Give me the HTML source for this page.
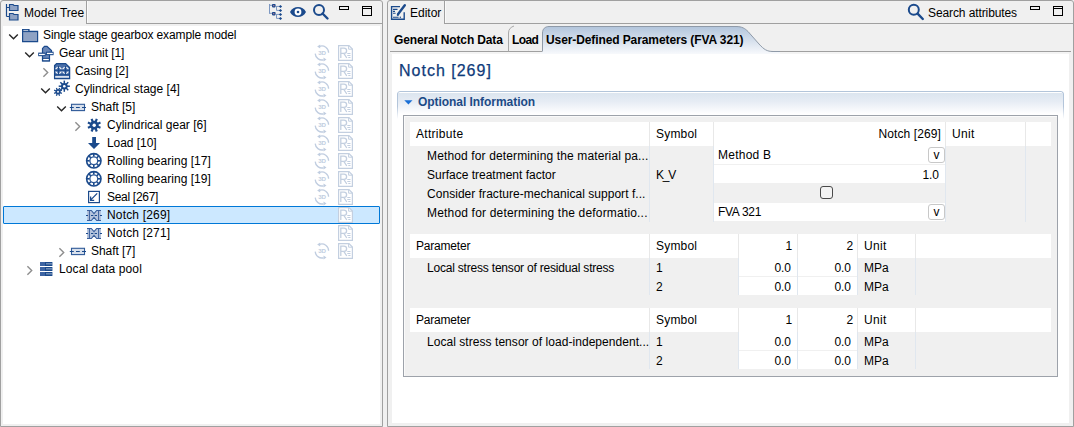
<!DOCTYPE html>
<html><head><meta charset="utf-8">
<style>
*{box-sizing:border-box}
html,body{margin:0;padding:0}
body{width:1074px;height:427px;position:relative;overflow:hidden;background:#f0f0f0;font-family:"Liberation Sans",sans-serif;font-size:12px;color:#000;letter-spacing:-0.05px}
.a{position:absolute}
.panel{position:absolute;border:1px solid #a0a0a0;border-radius:3px 3px 0 0;background:#f0f0f0}
.hl{position:absolute;height:1px;background:#a0a0a0}
.vl{position:absolute;width:1px;background:#a0a0a0}
.t{position:absolute;white-space:nowrap;line-height:18px;height:18px}
svg{position:absolute;overflow:visible}
.b{font-weight:bold}
</style></head><body>

<div class="panel" style="left:0;top:0;width:383px;height:427px"></div>
<div class="vl" style="left:86px;top:1px;height:23px"></div>
<div class="a" style="left:87px;top:1px;width:1px;height:22px;background:#fafafa"></div>
<div class="hl" style="left:87px;top:23px;width:295px"></div>
<div class="a" style="left:3px;top:26px;width:377px;height:398px;background:#fff"></div>
<svg style="left:0;top:0" width="24" height="24" viewBox="0 0 24 24">
<path d="M6.5 4v12.5M6.5 7.5h3M6.5 16.5h3" stroke="#1b4a8c" stroke-width="1.2" fill="none"/>
<path d="M9.5 4.5h3.5l1 1h4v5h-8.5z" fill="#8ea2c4" stroke="#1b4a8c" stroke-width="1.2"/>
<path d="M9.5 13.5h3.5l1 1h4v5.5h-8.5z" fill="#8ea2c4" stroke="#1b4a8c" stroke-width="1.2"/>
</svg>
<div class="t" style="left:24px;top:4px;letter-spacing:0.02px">Model Tree</div>
<svg style="left:262px;top:0" width="120" height="24" viewBox="0 0 120 24">
<g stroke="#7d98c2" stroke-width="1" fill="none">
<path d="M7.5 4v9.8M7.5 5.3h3M7.5 13.3h3M14.5 6v4.4M14.5 14v4.4M14.5 6.4h3.5M14.5 10.4h3.5M14.5 14.4h3.5M14.5 18.4h3.5"/>
</g>
<rect x="10" y="4" width="3.6" height="3.4" rx="0.8" fill="#1b4a8c"/>
<rect x="10" y="12" width="3.6" height="3.4" rx="0.8" fill="#1b4a8c"/>
<circle cx="11.8" cy="5.7" r="0.6" fill="#f08aa0"/>
<circle cx="11.8" cy="13.7" r="0.6" fill="#f08aa0"/>
<path d="M18.5 4.9l1.6 1.6-1.6 1.6-1.6-1.6zM18.5 8.9l1.6 1.6-1.6 1.6-1.6-1.6zM18.5 12.9l1.6 1.6-1.6 1.6-1.6-1.6zM18.5 16.9l1.6 1.6-1.6 1.6-1.6-1.6z" fill="#1b4a8c"/>
<path d="M28 12c3.2-6.8 12.8-6.8 16 0c-3.2 6.8-12.8 6.8-16 0z" fill="#1b4a8c"/>
<circle cx="36" cy="12" r="3.4" fill="#fff"/><circle cx="36" cy="12" r="2.1" fill="#fff" stroke="#1b4a8c" stroke-width="0"/><circle cx="36" cy="12" r="1.3" fill="#1b4a8c"/>
<circle cx="57" cy="10" r="5" stroke="#1b4a8c" stroke-width="2" fill="none"/>
<path d="M60.5 13.5l5 5" stroke="#1b4a8c" stroke-width="2.4" stroke-linecap="round"/>
<rect x="77.5" y="6.5" width="9" height="3" fill="none" stroke="#000" stroke-width="1"/>
<rect x="100.5" y="6.5" width="9" height="9" fill="none" stroke="#000" stroke-width="1"/>
<path d="M100.5 8.5h9" stroke="#000" stroke-width="1"/>
</svg>
<div class="a" style="left:3px;top:206px;width:377px;height:18px;background:#cce8ff;border:1px solid #0078d7;border-radius:1px"></div>
<svg style="left:8px;top:33px" width="10" height="7" viewBox="0 0 10 7"><path d="M1.2 1.4l4.3 4.3L9.8 1.4" stroke="#262626" stroke-width="1.4" fill="none"/></svg>
<svg style="left:20px;top:26px" width="20" height="18" viewBox="0 0 20 18"><path d="M2.6 15.6V3.6h6.4v1.7h8.6v10.3z" fill="#8ea2c4" stroke="#1b4a8c" stroke-width="1.2"/><path d="M3.5 4.4h4.5" stroke="#c3cddd" stroke-width="0.9"/><path d="M2.6 5.6h15" stroke="#1b4a8c" stroke-width="1"/></svg>
<div class="t" style="left:43px;top:26px;letter-spacing:-0.12px">Single stage gearbox example model</div>
<svg style="left:24px;top:51px" width="10" height="7" viewBox="0 0 10 7"><path d="M1.2 1.4l4.3 4.3L9.8 1.4" stroke="#262626" stroke-width="1.4" fill="none"/></svg>
<svg style="left:36px;top:44px" width="20" height="18" viewBox="0 0 20 18"><path d="M6.5 17V4.4L8.5 2.3H11L15.5 6.6V8.4H13.5V17Z" fill="#6a87b8" stroke="#1b4a8c" stroke-width="1.2"/><rect x="2.2" y="8.6" width="7.4" height="3.6" fill="#1b4a8c"/><rect x="3" y="9.8" width="5.8" height="1.3" fill="#fff"/><rect x="10" y="7.7" width="7.6" height="3.5" fill="#1b4a8c"/><rect x="10.9" y="8.8" width="5.9" height="1.3" fill="#fff"/><rect x="6.2" y="13.8" width="7.6" height="3.6" fill="#1b4a8c"/><rect x="7.2" y="14.9" width="5.6" height="1.3" fill="#fff"/></svg>
<div class="t" style="left:59px;top:44px;letter-spacing:-0.05px">Gear unit [1]</div>
<svg style="left:314px;top:45px" width="20" height="20" viewBox="314 45 20 20">
<path d="M319.5 46.3A6.8 6.8 0 0 1 328.6 52.8" stroke="#c0cde0" stroke-width="1.3" fill="none"/>
<path d="M315.2 53.6A6.8 6.8 0 0 0 323.5 59.8" stroke="#c0cde0" stroke-width="1.3" fill="none"/>
<path d="M317.2 46.5l3-2v4z" fill="#c0cde0"/>
<path d="M326.5 59.6l-3 2v-4z" fill="#c0cde0"/>
<text x="322" y="55.3" font-family="Liberation Sans" font-size="6.2" font-weight="bold" fill="#c0cde0" text-anchor="middle" letter-spacing="-0.1">3D</text>
</svg>
<svg style="left:338px;top:45px" width="16" height="16" viewBox="0 0 16 16">
<path d="M0.6 0.6h10.4l3.4 3.4v11.4h-13.8z" fill="#fff" stroke="#c3cfe0" stroke-width="1.2"/>
<path d="M10.6 0.6v3.6h3.8" fill="none" stroke="#c3cfe0" stroke-width="1"/>
<path d="M2.8 13V3.2h3.2a2.6 2.6 0 0 1 0 5.2H3.2M5.8 8.4l3 4.6" stroke="#c3cfe0" stroke-width="1.3" fill="none"/>
<path d="M9.3 8.5h3.2M9.3 10.5h3.2M10.3 12.5h2.2" stroke="#c3cfe0" stroke-width="1" fill="none"/>
</svg>
<svg style="left:42px;top:67px" width="7" height="10" viewBox="0 0 7 10"><path d="M1.4 1.2l4.3 4.3L1.4 9.8" stroke="#8e8e8e" stroke-width="1.4" fill="none"/></svg>
<svg style="left:52px;top:62px" width="20" height="18" viewBox="0 0 20 18"><path d="M2.6 16.6V3.6L4.6 1.6H13.6L17.6 5.6V16.6Z" fill="#4a6fa8" stroke="#1b4a8c" stroke-width="1.3"/><path d="M3 8.3h14.5M6.5 4v9M13.5 4v9M3 12.8h14.5" stroke="#1b4a8c" stroke-width="1"/><g stroke="#fff" stroke-width="1.1" fill="none"><path d="M3.6 7.2l2-2M7.4 5.2l2 2M3.6 9.6l2 2M7.4 11.6l2-2M10.6 7.2l2-2M14.4 5.2l2 2M10.6 9.6l2 2M14.4 11.6l2-2"/></g><rect x="3.2" y="14.2" width="13.8" height="1.4" fill="#fff"/></svg>
<div class="t" style="left:75px;top:62px;letter-spacing:-0.05px">Casing [2]</div>
<svg style="left:314px;top:63px" width="20" height="20" viewBox="314 45 20 20">
<path d="M319.5 46.3A6.8 6.8 0 0 1 328.6 52.8" stroke="#c0cde0" stroke-width="1.3" fill="none"/>
<path d="M315.2 53.6A6.8 6.8 0 0 0 323.5 59.8" stroke="#c0cde0" stroke-width="1.3" fill="none"/>
<path d="M317.2 46.5l3-2v4z" fill="#c0cde0"/>
<path d="M326.5 59.6l-3 2v-4z" fill="#c0cde0"/>
<text x="322" y="55.3" font-family="Liberation Sans" font-size="6.2" font-weight="bold" fill="#c0cde0" text-anchor="middle" letter-spacing="-0.1">3D</text>
</svg>
<svg style="left:338px;top:63px" width="16" height="16" viewBox="0 0 16 16">
<path d="M0.6 0.6h10.4l3.4 3.4v11.4h-13.8z" fill="#fff" stroke="#c3cfe0" stroke-width="1.2"/>
<path d="M10.6 0.6v3.6h3.8" fill="none" stroke="#c3cfe0" stroke-width="1"/>
<path d="M2.8 13V3.2h3.2a2.6 2.6 0 0 1 0 5.2H3.2M5.8 8.4l3 4.6" stroke="#c3cfe0" stroke-width="1.3" fill="none"/>
<path d="M9.3 8.5h3.2M9.3 10.5h3.2M10.3 12.5h2.2" stroke="#c3cfe0" stroke-width="1" fill="none"/>
</svg>
<svg style="left:40px;top:87px" width="10" height="7" viewBox="0 0 10 7"><path d="M1.2 1.4l4.3 4.3L9.8 1.4" stroke="#262626" stroke-width="1.4" fill="none"/></svg>
<svg style="left:52px;top:80px" width="20" height="18" viewBox="0 0 20 18"><circle cx="12.3" cy="6.2" r="3.3" fill="#1b4a8c"/><rect x="11.55" y="0.60" width="1.5" height="3.3" fill="#1b4a8c" transform="rotate(0.0 12.3 6.2)"/><rect x="11.55" y="0.60" width="1.5" height="3.3" fill="#1b4a8c" transform="rotate(45.0 12.3 6.2)"/><rect x="11.55" y="0.60" width="1.5" height="3.3" fill="#1b4a8c" transform="rotate(90.0 12.3 6.2)"/><rect x="11.55" y="0.60" width="1.5" height="3.3" fill="#1b4a8c" transform="rotate(135.0 12.3 6.2)"/><rect x="11.55" y="0.60" width="1.5" height="3.3" fill="#1b4a8c" transform="rotate(180.0 12.3 6.2)"/><rect x="11.55" y="0.60" width="1.5" height="3.3" fill="#1b4a8c" transform="rotate(225.0 12.3 6.2)"/><rect x="11.55" y="0.60" width="1.5" height="3.3" fill="#1b4a8c" transform="rotate(270.0 12.3 6.2)"/><rect x="11.55" y="0.60" width="1.5" height="3.3" fill="#1b4a8c" transform="rotate(315.0 12.3 6.2)"/><circle cx="12.3" cy="6.2" r="1.3" fill="#fff"/><circle cx="6" cy="11.8" r="2.5" fill="#1b4a8c"/><rect x="5.35" y="7.60" width="1.3" height="2.7" fill="#1b4a8c" transform="rotate(22.5 6 11.8)"/><rect x="5.35" y="7.60" width="1.3" height="2.7" fill="#1b4a8c" transform="rotate(67.5 6 11.8)"/><rect x="5.35" y="7.60" width="1.3" height="2.7" fill="#1b4a8c" transform="rotate(112.5 6 11.8)"/><rect x="5.35" y="7.60" width="1.3" height="2.7" fill="#1b4a8c" transform="rotate(157.5 6 11.8)"/><rect x="5.35" y="7.60" width="1.3" height="2.7" fill="#1b4a8c" transform="rotate(202.5 6 11.8)"/><rect x="5.35" y="7.60" width="1.3" height="2.7" fill="#1b4a8c" transform="rotate(247.5 6 11.8)"/><rect x="5.35" y="7.60" width="1.3" height="2.7" fill="#1b4a8c" transform="rotate(292.5 6 11.8)"/><rect x="5.35" y="7.60" width="1.3" height="2.7" fill="#1b4a8c" transform="rotate(337.5 6 11.8)"/><circle cx="6" cy="11.8" r="0.95" fill="#fff"/></svg>
<div class="t" style="left:75px;top:80px;letter-spacing:0.01px">Cylindrical stage [4]</div>
<svg style="left:314px;top:81px" width="20" height="20" viewBox="314 45 20 20">
<path d="M319.5 46.3A6.8 6.8 0 0 1 328.6 52.8" stroke="#c0cde0" stroke-width="1.3" fill="none"/>
<path d="M315.2 53.6A6.8 6.8 0 0 0 323.5 59.8" stroke="#c0cde0" stroke-width="1.3" fill="none"/>
<path d="M317.2 46.5l3-2v4z" fill="#c0cde0"/>
<path d="M326.5 59.6l-3 2v-4z" fill="#c0cde0"/>
<text x="322" y="55.3" font-family="Liberation Sans" font-size="6.2" font-weight="bold" fill="#c0cde0" text-anchor="middle" letter-spacing="-0.1">3D</text>
</svg>
<svg style="left:338px;top:81px" width="16" height="16" viewBox="0 0 16 16">
<path d="M0.6 0.6h10.4l3.4 3.4v11.4h-13.8z" fill="#fff" stroke="#c3cfe0" stroke-width="1.2"/>
<path d="M10.6 0.6v3.6h3.8" fill="none" stroke="#c3cfe0" stroke-width="1"/>
<path d="M2.8 13V3.2h3.2a2.6 2.6 0 0 1 0 5.2H3.2M5.8 8.4l3 4.6" stroke="#c3cfe0" stroke-width="1.3" fill="none"/>
<path d="M9.3 8.5h3.2M9.3 10.5h3.2M10.3 12.5h2.2" stroke="#c3cfe0" stroke-width="1" fill="none"/>
</svg>
<svg style="left:56px;top:105px" width="10" height="7" viewBox="0 0 10 7"><path d="M1.2 1.4l4.3 4.3L9.8 1.4" stroke="#262626" stroke-width="1.4" fill="none"/></svg>
<svg style="left:68px;top:98px" width="20" height="18" viewBox="0 0 20 18"><rect x="3.5" y="6.3" width="13" height="6.3" fill="#d8e0ec" stroke="#2f5a98" stroke-width="1.1"/><path d="M1.8 9.5h4M8 9.5h3.8M14 9.5h4" stroke="#1b4a8c" stroke-width="1.2"/></svg>
<div class="t" style="left:91px;top:98px;letter-spacing:-0.05px">Shaft [5]</div>
<svg style="left:314px;top:99px" width="20" height="20" viewBox="314 45 20 20">
<path d="M319.5 46.3A6.8 6.8 0 0 1 328.6 52.8" stroke="#c0cde0" stroke-width="1.3" fill="none"/>
<path d="M315.2 53.6A6.8 6.8 0 0 0 323.5 59.8" stroke="#c0cde0" stroke-width="1.3" fill="none"/>
<path d="M317.2 46.5l3-2v4z" fill="#c0cde0"/>
<path d="M326.5 59.6l-3 2v-4z" fill="#c0cde0"/>
<text x="322" y="55.3" font-family="Liberation Sans" font-size="6.2" font-weight="bold" fill="#c0cde0" text-anchor="middle" letter-spacing="-0.1">3D</text>
</svg>
<svg style="left:338px;top:99px" width="16" height="16" viewBox="0 0 16 16">
<path d="M0.6 0.6h10.4l3.4 3.4v11.4h-13.8z" fill="#fff" stroke="#c3cfe0" stroke-width="1.2"/>
<path d="M10.6 0.6v3.6h3.8" fill="none" stroke="#c3cfe0" stroke-width="1"/>
<path d="M2.8 13V3.2h3.2a2.6 2.6 0 0 1 0 5.2H3.2M5.8 8.4l3 4.6" stroke="#c3cfe0" stroke-width="1.3" fill="none"/>
<path d="M9.3 8.5h3.2M9.3 10.5h3.2M10.3 12.5h2.2" stroke="#c3cfe0" stroke-width="1" fill="none"/>
</svg>
<svg style="left:74px;top:121px" width="7" height="10" viewBox="0 0 7 10"><path d="M1.4 1.2l4.3 4.3L1.4 9.8" stroke="#8e8e8e" stroke-width="1.4" fill="none"/></svg>
<svg style="left:84px;top:116px" width="20" height="18" viewBox="0 0 20 18"><circle cx="10.2" cy="9.2" r="4.4" fill="#1b4a8c"/><rect x="9.10" y="2.40" width="2.2" height="3.4" fill="#1b4a8c" transform="rotate(22.5 10.2 9.2)"/><rect x="9.10" y="2.40" width="2.2" height="3.4" fill="#1b4a8c" transform="rotate(67.5 10.2 9.2)"/><rect x="9.10" y="2.40" width="2.2" height="3.4" fill="#1b4a8c" transform="rotate(112.5 10.2 9.2)"/><rect x="9.10" y="2.40" width="2.2" height="3.4" fill="#1b4a8c" transform="rotate(157.5 10.2 9.2)"/><rect x="9.10" y="2.40" width="2.2" height="3.4" fill="#1b4a8c" transform="rotate(202.5 10.2 9.2)"/><rect x="9.10" y="2.40" width="2.2" height="3.4" fill="#1b4a8c" transform="rotate(247.5 10.2 9.2)"/><rect x="9.10" y="2.40" width="2.2" height="3.4" fill="#1b4a8c" transform="rotate(292.5 10.2 9.2)"/><rect x="9.10" y="2.40" width="2.2" height="3.4" fill="#1b4a8c" transform="rotate(337.5 10.2 9.2)"/><circle cx="10.2" cy="9.2" r="1.7" fill="#fff"/></svg>
<div class="t" style="left:107px;top:116px;letter-spacing:0.01px">Cylindrical gear [6]</div>
<svg style="left:314px;top:117px" width="20" height="20" viewBox="314 45 20 20">
<path d="M319.5 46.3A6.8 6.8 0 0 1 328.6 52.8" stroke="#c0cde0" stroke-width="1.3" fill="none"/>
<path d="M315.2 53.6A6.8 6.8 0 0 0 323.5 59.8" stroke="#c0cde0" stroke-width="1.3" fill="none"/>
<path d="M317.2 46.5l3-2v4z" fill="#c0cde0"/>
<path d="M326.5 59.6l-3 2v-4z" fill="#c0cde0"/>
<text x="322" y="55.3" font-family="Liberation Sans" font-size="6.2" font-weight="bold" fill="#c0cde0" text-anchor="middle" letter-spacing="-0.1">3D</text>
</svg>
<svg style="left:338px;top:117px" width="16" height="16" viewBox="0 0 16 16">
<path d="M0.6 0.6h10.4l3.4 3.4v11.4h-13.8z" fill="#fff" stroke="#c3cfe0" stroke-width="1.2"/>
<path d="M10.6 0.6v3.6h3.8" fill="none" stroke="#c3cfe0" stroke-width="1"/>
<path d="M2.8 13V3.2h3.2a2.6 2.6 0 0 1 0 5.2H3.2M5.8 8.4l3 4.6" stroke="#c3cfe0" stroke-width="1.3" fill="none"/>
<path d="M9.3 8.5h3.2M9.3 10.5h3.2M10.3 12.5h2.2" stroke="#c3cfe0" stroke-width="1" fill="none"/>
</svg>
<svg style="left:84px;top:134px" width="20" height="18" viewBox="0 0 20 18"><path d="M8.2 3h3.8v6h4l-6 6l-6-6h4.2z" fill="#1b4a8c"/></svg>
<div class="t" style="left:107px;top:134px;letter-spacing:-0.05px">Load [10]</div>
<svg style="left:314px;top:135px" width="20" height="20" viewBox="314 45 20 20">
<path d="M319.5 46.3A6.8 6.8 0 0 1 328.6 52.8" stroke="#c0cde0" stroke-width="1.3" fill="none"/>
<path d="M315.2 53.6A6.8 6.8 0 0 0 323.5 59.8" stroke="#c0cde0" stroke-width="1.3" fill="none"/>
<path d="M317.2 46.5l3-2v4z" fill="#c0cde0"/>
<path d="M326.5 59.6l-3 2v-4z" fill="#c0cde0"/>
<text x="322" y="55.3" font-family="Liberation Sans" font-size="6.2" font-weight="bold" fill="#c0cde0" text-anchor="middle" letter-spacing="-0.1">3D</text>
</svg>
<svg style="left:338px;top:135px" width="16" height="16" viewBox="0 0 16 16">
<path d="M0.6 0.6h10.4l3.4 3.4v11.4h-13.8z" fill="#fff" stroke="#c3cfe0" stroke-width="1.2"/>
<path d="M10.6 0.6v3.6h3.8" fill="none" stroke="#c3cfe0" stroke-width="1"/>
<path d="M2.8 13V3.2h3.2a2.6 2.6 0 0 1 0 5.2H3.2M5.8 8.4l3 4.6" stroke="#c3cfe0" stroke-width="1.3" fill="none"/>
<path d="M9.3 8.5h3.2M9.3 10.5h3.2M10.3 12.5h2.2" stroke="#c3cfe0" stroke-width="1" fill="none"/>
</svg>
<svg style="left:84px;top:152px" width="20" height="18" viewBox="0 0 20 18"><circle cx="9.8" cy="8.8" r="7.2" fill="none" stroke="#1b4a8c" stroke-width="1.6"/><circle cx="9.8" cy="8.8" r="3.9" fill="none" stroke="#2f5a98" stroke-width="1.3"/><path d="M14.00 8.80L16.60 8.80" stroke="#1b4a8c" stroke-width="1.6"/><path d="M12.77 11.77L14.61 13.61" stroke="#1b4a8c" stroke-width="1.6"/><path d="M9.80 13.00L9.80 15.60" stroke="#1b4a8c" stroke-width="1.6"/><path d="M6.83 11.77L4.99 13.61" stroke="#1b4a8c" stroke-width="1.6"/><path d="M5.60 8.80L3.00 8.80" stroke="#1b4a8c" stroke-width="1.6"/><path d="M6.83 5.83L4.99 3.99" stroke="#1b4a8c" stroke-width="1.6"/><path d="M9.80 4.60L9.80 2.00" stroke="#1b4a8c" stroke-width="1.6"/><path d="M12.77 5.83L14.61 3.99" stroke="#1b4a8c" stroke-width="1.6"/></svg>
<div class="t" style="left:107px;top:152px;letter-spacing:0.02px">Rolling bearing [17]</div>
<svg style="left:314px;top:153px" width="20" height="20" viewBox="314 45 20 20">
<path d="M319.5 46.3A6.8 6.8 0 0 1 328.6 52.8" stroke="#c0cde0" stroke-width="1.3" fill="none"/>
<path d="M315.2 53.6A6.8 6.8 0 0 0 323.5 59.8" stroke="#c0cde0" stroke-width="1.3" fill="none"/>
<path d="M317.2 46.5l3-2v4z" fill="#c0cde0"/>
<path d="M326.5 59.6l-3 2v-4z" fill="#c0cde0"/>
<text x="322" y="55.3" font-family="Liberation Sans" font-size="6.2" font-weight="bold" fill="#c0cde0" text-anchor="middle" letter-spacing="-0.1">3D</text>
</svg>
<svg style="left:338px;top:153px" width="16" height="16" viewBox="0 0 16 16">
<path d="M0.6 0.6h10.4l3.4 3.4v11.4h-13.8z" fill="#fff" stroke="#c3cfe0" stroke-width="1.2"/>
<path d="M10.6 0.6v3.6h3.8" fill="none" stroke="#c3cfe0" stroke-width="1"/>
<path d="M2.8 13V3.2h3.2a2.6 2.6 0 0 1 0 5.2H3.2M5.8 8.4l3 4.6" stroke="#c3cfe0" stroke-width="1.3" fill="none"/>
<path d="M9.3 8.5h3.2M9.3 10.5h3.2M10.3 12.5h2.2" stroke="#c3cfe0" stroke-width="1" fill="none"/>
</svg>
<svg style="left:84px;top:170px" width="20" height="18" viewBox="0 0 20 18"><circle cx="9.8" cy="8.8" r="7.2" fill="none" stroke="#1b4a8c" stroke-width="1.6"/><circle cx="9.8" cy="8.8" r="3.9" fill="none" stroke="#2f5a98" stroke-width="1.3"/><path d="M14.00 8.80L16.60 8.80" stroke="#1b4a8c" stroke-width="1.6"/><path d="M12.77 11.77L14.61 13.61" stroke="#1b4a8c" stroke-width="1.6"/><path d="M9.80 13.00L9.80 15.60" stroke="#1b4a8c" stroke-width="1.6"/><path d="M6.83 11.77L4.99 13.61" stroke="#1b4a8c" stroke-width="1.6"/><path d="M5.60 8.80L3.00 8.80" stroke="#1b4a8c" stroke-width="1.6"/><path d="M6.83 5.83L4.99 3.99" stroke="#1b4a8c" stroke-width="1.6"/><path d="M9.80 4.60L9.80 2.00" stroke="#1b4a8c" stroke-width="1.6"/><path d="M12.77 5.83L14.61 3.99" stroke="#1b4a8c" stroke-width="1.6"/></svg>
<div class="t" style="left:107px;top:170px;letter-spacing:0.02px">Rolling bearing [19]</div>
<svg style="left:314px;top:171px" width="20" height="20" viewBox="314 45 20 20">
<path d="M319.5 46.3A6.8 6.8 0 0 1 328.6 52.8" stroke="#c0cde0" stroke-width="1.3" fill="none"/>
<path d="M315.2 53.6A6.8 6.8 0 0 0 323.5 59.8" stroke="#c0cde0" stroke-width="1.3" fill="none"/>
<path d="M317.2 46.5l3-2v4z" fill="#c0cde0"/>
<path d="M326.5 59.6l-3 2v-4z" fill="#c0cde0"/>
<text x="322" y="55.3" font-family="Liberation Sans" font-size="6.2" font-weight="bold" fill="#c0cde0" text-anchor="middle" letter-spacing="-0.1">3D</text>
</svg>
<svg style="left:338px;top:171px" width="16" height="16" viewBox="0 0 16 16">
<path d="M0.6 0.6h10.4l3.4 3.4v11.4h-13.8z" fill="#fff" stroke="#c3cfe0" stroke-width="1.2"/>
<path d="M10.6 0.6v3.6h3.8" fill="none" stroke="#c3cfe0" stroke-width="1"/>
<path d="M2.8 13V3.2h3.2a2.6 2.6 0 0 1 0 5.2H3.2M5.8 8.4l3 4.6" stroke="#c3cfe0" stroke-width="1.3" fill="none"/>
<path d="M9.3 8.5h3.2M9.3 10.5h3.2M10.3 12.5h2.2" stroke="#c3cfe0" stroke-width="1" fill="none"/>
</svg>
<svg style="left:84px;top:188px" width="20" height="18" viewBox="0 0 20 18"><rect x="4.6" y="3.4" width="10.8" height="11.2" fill="#fff" stroke="#1b4a8c" stroke-width="1.2"/><path d="M13.2 5.4L6.8 11.9M6.6 8.6v3.8h3.6" stroke="#1b4a8c" stroke-width="1.3" fill="none"/></svg>
<div class="t" style="left:107px;top:188px;letter-spacing:-0.3px">Seal [267]</div>
<svg style="left:314px;top:189px" width="20" height="20" viewBox="314 45 20 20">
<path d="M319.5 46.3A6.8 6.8 0 0 1 328.6 52.8" stroke="#c0cde0" stroke-width="1.3" fill="none"/>
<path d="M315.2 53.6A6.8 6.8 0 0 0 323.5 59.8" stroke="#c0cde0" stroke-width="1.3" fill="none"/>
<path d="M317.2 46.5l3-2v4z" fill="#c0cde0"/>
<path d="M326.5 59.6l-3 2v-4z" fill="#c0cde0"/>
<text x="322" y="55.3" font-family="Liberation Sans" font-size="6.2" font-weight="bold" fill="#c0cde0" text-anchor="middle" letter-spacing="-0.1">3D</text>
</svg>
<svg style="left:338px;top:189px" width="16" height="16" viewBox="0 0 16 16">
<path d="M0.6 0.6h10.4l3.4 3.4v11.4h-13.8z" fill="#fff" stroke="#c3cfe0" stroke-width="1.2"/>
<path d="M10.6 0.6v3.6h3.8" fill="none" stroke="#c3cfe0" stroke-width="1"/>
<path d="M2.8 13V3.2h3.2a2.6 2.6 0 0 1 0 5.2H3.2M5.8 8.4l3 4.6" stroke="#c3cfe0" stroke-width="1.3" fill="none"/>
<path d="M9.3 8.5h3.2M9.3 10.5h3.2M10.3 12.5h2.2" stroke="#c3cfe0" stroke-width="1" fill="none"/>
</svg>
<svg style="left:84px;top:206px" width="20" height="18" viewBox="0 0 20 18"><path d="M3 4H7.3L10 7.2L12.7 4H17V15H12.7L10 11.8L7.3 15H3Z" fill="#b5c4dd"/><path d="M3 4.5H7.3L10 7.6L12.7 4.5H17M3 14.5H7.3L10 11.4L12.7 14.5H17M5.4 4.5V14.5M14.6 4.5V14.5" fill="none" stroke="#3a5f9c" stroke-width="1.05"/><path d="M2 9.5h2M7 9.5h2.3M10.7 9.5h2.3M16 9.5h2" stroke="#1b4a8c" stroke-width="1.1"/></svg>
<div class="t" style="left:107px;top:206px;letter-spacing:0.17px">Notch [269]</div>
<svg style="left:338px;top:207px" width="16" height="16" viewBox="0 0 16 16">
<path d="M0.6 0.6h10.4l3.4 3.4v11.4h-13.8z" fill="#fff" stroke="#c3cfe0" stroke-width="1.2"/>
<path d="M10.6 0.6v3.6h3.8" fill="none" stroke="#c3cfe0" stroke-width="1"/>
<path d="M2.8 13V3.2h3.2a2.6 2.6 0 0 1 0 5.2H3.2M5.8 8.4l3 4.6" stroke="#c3cfe0" stroke-width="1.3" fill="none"/>
<path d="M9.3 8.5h3.2M9.3 10.5h3.2M10.3 12.5h2.2" stroke="#c3cfe0" stroke-width="1" fill="none"/>
</svg>
<svg style="left:84px;top:224px" width="20" height="18" viewBox="0 0 20 18"><path d="M3 4H7.3L10 7.2L12.7 4H17V15H12.7L10 11.8L7.3 15H3Z" fill="#b5c4dd"/><path d="M3 4.5H7.3L10 7.6L12.7 4.5H17M3 14.5H7.3L10 11.4L12.7 14.5H17M5.4 4.5V14.5M14.6 4.5V14.5" fill="none" stroke="#3a5f9c" stroke-width="1.05"/><path d="M2 9.5h2M7 9.5h2.3M10.7 9.5h2.3M16 9.5h2" stroke="#1b4a8c" stroke-width="1.1"/></svg>
<div class="t" style="left:107px;top:224px;letter-spacing:0.17px">Notch [271]</div>
<svg style="left:338px;top:225px" width="16" height="16" viewBox="0 0 16 16">
<path d="M0.6 0.6h10.4l3.4 3.4v11.4h-13.8z" fill="#fff" stroke="#c3cfe0" stroke-width="1.2"/>
<path d="M10.6 0.6v3.6h3.8" fill="none" stroke="#c3cfe0" stroke-width="1"/>
<path d="M2.8 13V3.2h3.2a2.6 2.6 0 0 1 0 5.2H3.2M5.8 8.4l3 4.6" stroke="#c3cfe0" stroke-width="1.3" fill="none"/>
<path d="M9.3 8.5h3.2M9.3 10.5h3.2M10.3 12.5h2.2" stroke="#c3cfe0" stroke-width="1" fill="none"/>
</svg>
<svg style="left:58px;top:247px" width="7" height="10" viewBox="0 0 7 10"><path d="M1.4 1.2l4.3 4.3L1.4 9.8" stroke="#8e8e8e" stroke-width="1.4" fill="none"/></svg>
<svg style="left:68px;top:242px" width="20" height="18" viewBox="0 0 20 18"><rect x="3.5" y="6.3" width="13" height="6.3" fill="#d8e0ec" stroke="#2f5a98" stroke-width="1.1"/><path d="M1.8 9.5h4M8 9.5h3.8M14 9.5h4" stroke="#1b4a8c" stroke-width="1.2"/></svg>
<div class="t" style="left:91px;top:242px;letter-spacing:-0.05px">Shaft [7]</div>
<svg style="left:314px;top:243px" width="20" height="20" viewBox="314 45 20 20">
<path d="M319.5 46.3A6.8 6.8 0 0 1 328.6 52.8" stroke="#c0cde0" stroke-width="1.3" fill="none"/>
<path d="M315.2 53.6A6.8 6.8 0 0 0 323.5 59.8" stroke="#c0cde0" stroke-width="1.3" fill="none"/>
<path d="M317.2 46.5l3-2v4z" fill="#c0cde0"/>
<path d="M326.5 59.6l-3 2v-4z" fill="#c0cde0"/>
<text x="322" y="55.3" font-family="Liberation Sans" font-size="6.2" font-weight="bold" fill="#c0cde0" text-anchor="middle" letter-spacing="-0.1">3D</text>
</svg>
<svg style="left:338px;top:243px" width="16" height="16" viewBox="0 0 16 16">
<path d="M0.6 0.6h10.4l3.4 3.4v11.4h-13.8z" fill="#fff" stroke="#c3cfe0" stroke-width="1.2"/>
<path d="M10.6 0.6v3.6h3.8" fill="none" stroke="#c3cfe0" stroke-width="1"/>
<path d="M2.8 13V3.2h3.2a2.6 2.6 0 0 1 0 5.2H3.2M5.8 8.4l3 4.6" stroke="#c3cfe0" stroke-width="1.3" fill="none"/>
<path d="M9.3 8.5h3.2M9.3 10.5h3.2M10.3 12.5h2.2" stroke="#c3cfe0" stroke-width="1" fill="none"/>
</svg>
<svg style="left:26px;top:265px" width="7" height="10" viewBox="0 0 7 10"><path d="M1.4 1.2l4.3 4.3L1.4 9.8" stroke="#8e8e8e" stroke-width="1.4" fill="none"/></svg>
<svg style="left:36px;top:260px" width="20" height="18" viewBox="0 0 20 18"><rect x="4" y="2" width="12.4" height="4" fill="#1b4a8c"/><rect x="4" y="2" width="5" height="4" fill="#3d64a3"/><circle cx="11" cy="3.8" r="0.65" fill="#fff"/><circle cx="13" cy="3.8" r="0.65" fill="#fff"/><circle cx="15" cy="3.8" r="0.65" fill="#fff"/><rect x="4" y="7" width="12.4" height="4" fill="#1b4a8c"/><rect x="4" y="7" width="5" height="4" fill="#3d64a3"/><circle cx="11" cy="8.8" r="0.65" fill="#fff"/><circle cx="13" cy="8.8" r="0.65" fill="#fff"/><circle cx="15" cy="8.8" r="0.65" fill="#fff"/><rect x="4" y="12" width="12.4" height="4" fill="#1b4a8c"/><rect x="4" y="12" width="5" height="4" fill="#3d64a3"/><circle cx="11" cy="13.8" r="0.65" fill="#fff"/><circle cx="13" cy="13.8" r="0.65" fill="#fff"/><circle cx="15" cy="13.8" r="0.65" fill="#fff"/></svg>
<div class="t" style="left:59px;top:260px;letter-spacing:0.1px">Local data pool</div>
<div class="panel" style="left:387px;top:0;width:687px;height:427px"></div>
<div class="vl" style="left:444px;top:1px;height:23px"></div>
<div class="a" style="left:445px;top:1px;width:1px;height:22px;background:#fafafa"></div>
<div class="hl" style="left:445px;top:23px;width:628px"></div>
<div class="a" style="left:392px;top:54px;width:677px;height:369px;background:#fff"></div>
<svg style="left:388px;top:2px" width="20" height="20" viewBox="0 0 20 20">
<path d="M12 4.6H3.6v12.7h12.6v-7" fill="none" stroke="#1b4a8c" stroke-width="1.4"/>
<path d="M5 7.4h4.5M5 9.4h2M5 11.3h2.6M5 15.2h5.6" stroke="#1b4a8c" stroke-width="1.1"/>
<circle cx="12.3" cy="15.2" r="0.7" fill="#1b4a8c"/>
<path d="M10 12.3l6.8-9" stroke="#1b4a8c" stroke-width="2.4" stroke-linecap="round"/>
<path d="M9.3 13.6l0.3-1.6 1.2 0.9z" fill="#1b4a8c" stroke="#1b4a8c" stroke-width="0.8"/>
</svg>
<div class="t" style="left:410px;top:4px;letter-spacing:0">Editor</div>
<svg style="left:904px;top:0" width="26" height="24" viewBox="0 0 26 24">
<circle cx="9.8" cy="9.8" r="5" stroke="#1b4a8c" stroke-width="2" fill="none"/>
<path d="M13.6 13.6l5.2 5.4" stroke="#1b4a8c" stroke-width="2.4" stroke-linecap="round"/>
</svg>
<div class="t" style="left:928px;top:4px;letter-spacing:-0.1px">Search attributes</div>
<svg style="left:1020px;top:0" width="50" height="24" viewBox="0 0 50 24">
<rect x="10.5" y="6.5" width="9" height="3" fill="none" stroke="#000" stroke-width="1"/>
<rect x="33.5" y="6.5" width="9" height="9" fill="none" stroke="#000" stroke-width="1"/>
<path d="M33.5 8.5h9" stroke="#000" stroke-width="1"/>
</svg>
<div class="hl" style="left:390px;top:51px;width:152px"></div>
<div class="hl" style="left:772px;top:51px;width:299px"></div>
<div class="a" style="left:391px;top:52px;width:678px;height:2px;background:#f4f4f4"></div>
<svg style="left:500px;top:24px" width="60" height="30" viewBox="0 0 60 30">
<path d="M8.5 27.5V9C8.5 5 11 3 14 2" stroke="#a8a8a8" stroke-width="1" fill="none"/>
</svg>
<svg style="left:540px;top:24px" width="240" height="30" viewBox="0 0 240 30">
<defs><linearGradient id="tg" x1="0" y1="0" x2="0" y2="1">
<stop offset="0" stop-color="#b2c5dc"/><stop offset="1" stop-color="#f7f9fc"/></linearGradient></defs>
<path d="M2.5 28V9C2.5 5 5 2.5 9 2.5H196C202 2.5 205 4.5 208 7.5L219 20C224 25.5 227 27.5 233 27.5H240V30H0V28z" fill="url(#tg)"/>
<path d="M2.5 27.5V9C2.5 5 5 2.5 9 2.5H196C202 2.5 205 4.5 208 7.5L219 20C224 25.5 227 27.5 233 27.5H240" stroke="#8f9aa8" stroke-width="1" fill="none"/>
</svg>
<div class="t b" style="left:394px;top:31px;letter-spacing:-0.15px">General Notch Data</div>
<div class="t b" style="left:512px;top:31px;letter-spacing:-0.6px">Load</div>
<div class="t b" style="left:546px;top:31px;letter-spacing:-0.1px">User-Defined Parameters (FVA 321)</div>
<div class="a" style="left:399px;top:59px;font-size:16px;line-height:24px;color:#0f3b7a;letter-spacing:1.0px;-webkit-text-stroke:0.25px #0f3b7a;white-space:nowrap">Notch [269]</div>
<div class="a" style="left:397px;top:91px;width:667px;height:28px;border-radius:3px 3px 0 0;border:1px solid #b3c5da;border-bottom:none;background:#fff;-webkit-mask-image:linear-gradient(#000 55%,transparent)"></div>
<div class="a" style="left:398px;top:93px;width:665px;height:21px;background:linear-gradient(#dce5ef,#e6ecf4 40%,#ffffff)"></div>
<svg style="left:404px;top:100px" width="9" height="5" viewBox="0 0 9 5"><path d="M0.3 0.2h8.2L4.4 4.6z" fill="#1a6fd6"/></svg>
<div class="t b" style="left:418px;top:93px;color:#1c4a86;letter-spacing:-0.05px">Optional Information</div>
<div class="a" style="left:403px;top:115px;width:655px;height:262px;border:1px solid #9da2aa;background:#f0f0f0;box-shadow:inset 1px 1px 0 #fafafa"></div>
<div class="a" style="left:410px;top:122px;width:641px;height:24px;background:#fff"></div>
<div class="a" style="left:649px;top:122px;width:1px;height:24px;background:#e8e8e8"></div>
<div class="a" style="left:649px;top:146px;width:1px;height:76px;background:#e0e7ef"></div>
<div class="a" style="left:713px;top:122px;width:1px;height:24px;background:#e8e8e8"></div>
<div class="a" style="left:713px;top:146px;width:1px;height:76px;background:#e0e7ef"></div>
<div class="a" style="left:945px;top:122px;width:1px;height:24px;background:#e8e8e8"></div>
<div class="a" style="left:945px;top:146px;width:1px;height:76px;background:#e0e7ef"></div>
<div class="a" style="left:1025px;top:122px;width:1px;height:24px;background:#e8e8e8"></div>
<div class="a" style="left:1025px;top:146px;width:1px;height:76px;background:#e0e7ef"></div>
<div class="a" style="left:714px;top:146px;width:231px;height:18px;background:#fff"></div>
<div class="a" style="left:714px;top:165px;width:231px;height:18px;background:#fff"></div>
<div class="a" style="left:714px;top:203px;width:231px;height:18px;background:#fff"></div>
<div class="t" style="left:416px;top:125px;letter-spacing:0.3px">Attribute</div>
<div class="t" style="left:656px;top:125px;letter-spacing:0.2px">Symbol</div>
<div class="t" style="left:741px;top:125px;width:200px;text-align:right;letter-spacing:0.1px">Notch [269]</div>
<div class="t" style="left:952px;top:125px;letter-spacing:0.3px">Unit</div>
<div class="t" style="left:427px;top:147px;letter-spacing:0.13px">Method for determining the material pa...</div>
<div class="t" style="left:427px;top:166px;letter-spacing:0px">Surface treatment factor</div>
<div class="t" style="left:427px;top:185px;letter-spacing:0.04px">Consider fracture-mechanical support f...</div>
<div class="t" style="left:427px;top:204px;letter-spacing:0.18px">Method for determining the deformatio...</div>
<div class="t" style="left:656px;top:166px;letter-spacing:-1.2px">K_V</div>
<div class="t" style="left:718px;top:146px;letter-spacing:0.25px">Method B</div>
<div class="t" style="left:718px;top:203px;letter-spacing:-0.3px">FVA 321</div>
<div class="t" style="left:739px;top:166px;width:200px;text-align:right;">1.0</div>
<div class="a" style="left:928px;top:147px;width:17px;height:16px;border:1px solid #c8c8c8;border-radius:3px;background:#fff"></div>
<div class="t" style="left:928px;top:146px;width:17px;text-align:center;font-size:12px">v</div>
<div class="a" style="left:928px;top:204px;width:17px;height:16px;border:1px solid #c8c8c8;border-radius:3px;background:#fff"></div>
<div class="t" style="left:928px;top:203px;width:17px;text-align:center;font-size:12px">v</div>
<div class="a" style="left:820px;top:186px;width:13px;height:13px;border:1.3px solid #4a4a4a;border-radius:3px;background:#f4f4f4"></div>
<div class="a" style="left:410px;top:234px;width:641px;height:24px;background:#fff"></div>
<div class="a" style="left:649px;top:234px;width:1px;height:24px;background:#e8e8e8"></div>
<div class="a" style="left:649px;top:258px;width:1px;height:37px;background:#e0e7ef"></div>
<div class="a" style="left:738px;top:234px;width:1px;height:24px;background:#e8e8e8"></div>
<div class="a" style="left:738px;top:258px;width:1px;height:37px;background:#e0e7ef"></div>
<div class="a" style="left:797px;top:234px;width:1px;height:24px;background:#e8e8e8"></div>
<div class="a" style="left:797px;top:258px;width:1px;height:37px;background:#e0e7ef"></div>
<div class="a" style="left:857px;top:234px;width:1px;height:24px;background:#e8e8e8"></div>
<div class="a" style="left:857px;top:258px;width:1px;height:37px;background:#e0e7ef"></div>
<div class="a" style="left:915px;top:234px;width:1px;height:24px;background:#e8e8e8"></div>
<div class="a" style="left:915px;top:258px;width:1px;height:37px;background:#e0e7ef"></div>
<div class="a" style="left:739px;top:258px;width:58px;height:18px;background:#fff"></div>
<div class="a" style="left:798px;top:258px;width:59px;height:18px;background:#fff"></div>
<div class="a" style="left:739px;top:277px;width:58px;height:18px;background:#fff"></div>
<div class="a" style="left:798px;top:277px;width:59px;height:18px;background:#fff"></div>
<div class="t" style="left:416px;top:237px;letter-spacing:-0.2px">Parameter</div>
<div class="t" style="left:656px;top:237px;letter-spacing:0.2px">Symbol</div>
<div class="t" style="left:592px;top:237px;width:200px;text-align:right;">1</div>
<div class="t" style="left:653px;top:237px;width:200px;text-align:right;">2</div>
<div class="t" style="left:864px;top:237px;letter-spacing:0.3px">Unit</div>
<div class="t" style="left:427px;top:259px;letter-spacing:-0.2px">Local stress tensor of residual stress</div>
<div class="t" style="left:656px;top:259px;">1</div>
<div class="t" style="left:656px;top:278px;">2</div>
<div class="t" style="left:591px;top:259px;width:200px;text-align:right;">0.0</div>
<div class="t" style="left:651px;top:259px;width:200px;text-align:right;">0.0</div>
<div class="t" style="left:864px;top:259px;">MPa</div>
<div class="t" style="left:591px;top:278px;width:200px;text-align:right;">0.0</div>
<div class="t" style="left:651px;top:278px;width:200px;text-align:right;">0.0</div>
<div class="t" style="left:864px;top:278px;">MPa</div>
<div class="a" style="left:410px;top:308px;width:641px;height:24px;background:#fff"></div>
<div class="a" style="left:649px;top:308px;width:1px;height:24px;background:#e8e8e8"></div>
<div class="a" style="left:649px;top:332px;width:1px;height:37px;background:#e0e7ef"></div>
<div class="a" style="left:738px;top:308px;width:1px;height:24px;background:#e8e8e8"></div>
<div class="a" style="left:738px;top:332px;width:1px;height:37px;background:#e0e7ef"></div>
<div class="a" style="left:797px;top:308px;width:1px;height:24px;background:#e8e8e8"></div>
<div class="a" style="left:797px;top:332px;width:1px;height:37px;background:#e0e7ef"></div>
<div class="a" style="left:857px;top:308px;width:1px;height:24px;background:#e8e8e8"></div>
<div class="a" style="left:857px;top:332px;width:1px;height:37px;background:#e0e7ef"></div>
<div class="a" style="left:915px;top:308px;width:1px;height:24px;background:#e8e8e8"></div>
<div class="a" style="left:915px;top:332px;width:1px;height:37px;background:#e0e7ef"></div>
<div class="a" style="left:739px;top:332px;width:58px;height:18px;background:#fff"></div>
<div class="a" style="left:798px;top:332px;width:59px;height:18px;background:#fff"></div>
<div class="a" style="left:739px;top:351px;width:58px;height:18px;background:#fff"></div>
<div class="a" style="left:798px;top:351px;width:59px;height:18px;background:#fff"></div>
<div class="t" style="left:416px;top:311px;letter-spacing:-0.2px">Parameter</div>
<div class="t" style="left:656px;top:311px;letter-spacing:0.2px">Symbol</div>
<div class="t" style="left:592px;top:311px;width:200px;text-align:right;">1</div>
<div class="t" style="left:653px;top:311px;width:200px;text-align:right;">2</div>
<div class="t" style="left:864px;top:311px;letter-spacing:0.3px">Unit</div>
<div class="t" style="left:427px;top:333px;letter-spacing:0.05px">Local stress tensor of load-independent...</div>
<div class="t" style="left:656px;top:333px;">1</div>
<div class="t" style="left:656px;top:352px;">2</div>
<div class="t" style="left:591px;top:333px;width:200px;text-align:right;">0.0</div>
<div class="t" style="left:651px;top:333px;width:200px;text-align:right;">0.0</div>
<div class="t" style="left:864px;top:333px;">MPa</div>
<div class="t" style="left:591px;top:352px;width:200px;text-align:right;">0.0</div>
<div class="t" style="left:651px;top:352px;width:200px;text-align:right;">0.0</div>
<div class="t" style="left:864px;top:352px;">MPa</div>
</body></html>
